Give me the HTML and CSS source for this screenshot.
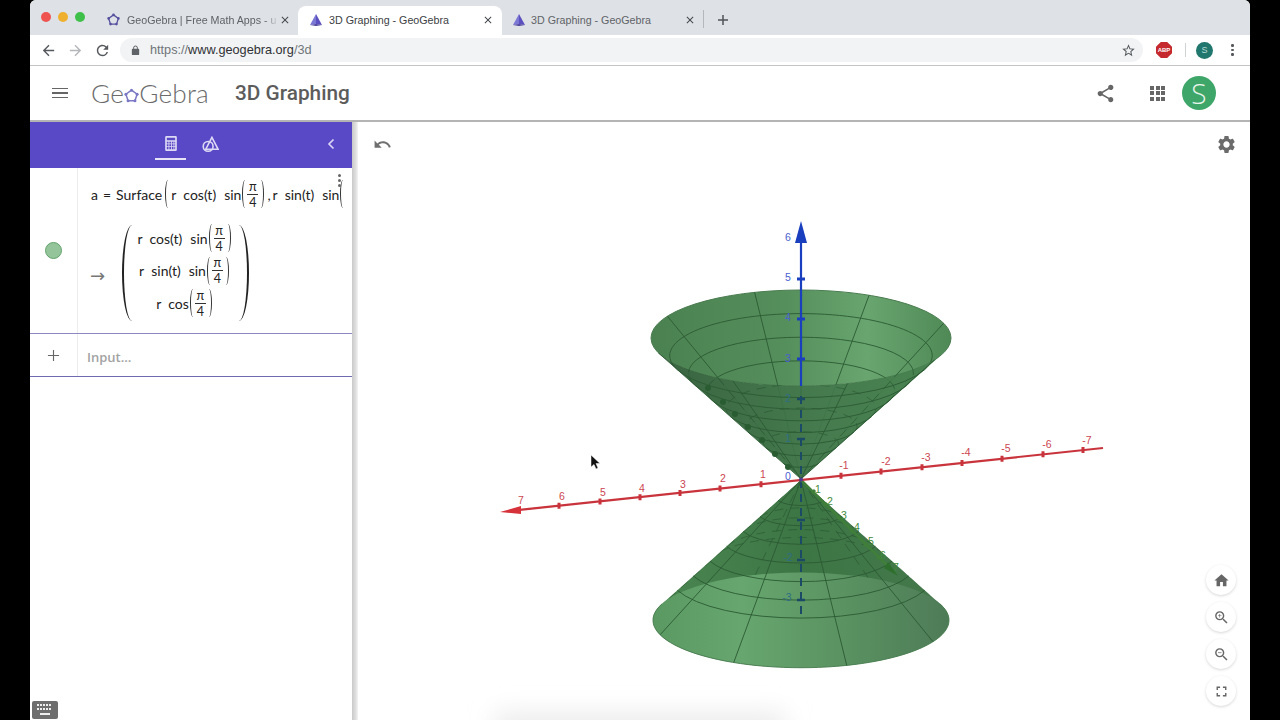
FILE: index.html
```html
<!DOCTYPE html>
<html lang="en">
<head>
<meta charset="utf-8">
<title>3D Graphing - GeoGebra</title>
<link rel="stylesheet" href="styles.css">
</head>
<body>
<svg class="defs" width="0" height="0" aria-hidden="true">
  <symbol id="i-close" viewBox="0 0 24 24"><path d="M19 6.41L17.59 5 12 10.59 6.41 5 5 6.41 10.59 12 5 17.59 6.41 19 12 13.41 17.59 19 19 17.59 13.41 12z"/></symbol>
  <symbol id="i-pyramid" viewBox="0 0 14 14"><path d="M7 1L13 12 7 11z" fill="#5c4fc0"/><path d="M7 1L1 12 7 11z" fill="#7a78d4"/><path d="M1 12L7 13 13 12 7 11z" fill="#48409c"/></symbol>
  <symbol id="i-pent" viewBox="0 0 24 24"><path d="M12 3.5L21 10 17.5 20.5H6.5L3 10z" fill="none" stroke="currentColor" stroke-width="2.4"/><g fill="currentColor"><circle cx="12" cy="3.5" r="2.4"/><circle cx="21" cy="10" r="2.4"/><circle cx="17.5" cy="20.5" r="2.4"/><circle cx="6.5" cy="20.5" r="2.4"/><circle cx="3" cy="10" r="2.4"/></g></symbol>
  <symbol id="i-search" viewBox="0 0 24 24"><path d="M15.5 14h-.79l-.28-.27A6.471 6.471 0 0 0 16 9.5 6.5 6.5 0 1 0 9.5 16c1.61 0 3.09-.59 4.23-1.57l.27.28v.79l5 4.99L20.49 19l-4.99-5zm-6 0C7.01 14 5 11.99 5 9.5S7.01 5 9.5 5 14 7.01 14 9.5 11.99 14 9.5 14z"/></symbol>
</svg>

<div class="window">
  <header class="tabstrip">
    <div class="lights"><i class="light red"></i><i class="light amber"></i><i class="light green"></i></div>
    <div class="tab tab-first">
      <svg class="fav fav-pent"><use href="#i-pent"/></svg>
      <span class="tab-title fade">GeoGebra | Free Math Apps - u</span>
      <svg class="tab-x"><use href="#i-close"/></svg>
    </div>
    <div class="tab tab-active">
      <svg class="fav"><use href="#i-pyramid"/></svg>
      <span class="tab-title">3D Graphing - GeoGebra</span>
      <svg class="tab-x"><use href="#i-close"/></svg>
    </div>
    <div class="tab tab-third">
      <svg class="fav"><use href="#i-pyramid"/></svg>
      <span class="tab-title">3D Graphing - GeoGebra</span>
      <svg class="tab-x"><use href="#i-close"/></svg>
    </div>
    <span class="tab-sep"></span>
    <svg class="new-tab" viewBox="0 0 12 12"><path d="M6 1v10M1 6h10"/></svg>
  </header>

  <nav class="toolbar">
    <svg class="tb-icon" viewBox="0 0 24 24"><path d="M20 11H7.83l5.59-5.59L12 4l-8 8 8 8 1.41-1.41L7.83 13H20v-2z"/></svg>
    <svg class="tb-icon tb-off" viewBox="0 0 24 24"><path d="M12 4l-1.41 1.41L16.17 11H4v2h12.17l-5.58 5.59L12 20l8-8z"/></svg>
    <svg class="tb-icon" viewBox="0 0 24 24"><path d="M17.65 6.35A7.958 7.958 0 0 0 12 4c-4.42 0-7.99 3.58-7.99 8s3.57 8 7.99 8c3.73 0 6.84-2.55 7.73-6h-2.08A5.99 5.99 0 0 1 12 18c-3.31 0-6-2.69-6-6s2.69-6 6-6c1.66 0 3.14.69 4.22 1.78L13 11h7V4l-2.35 2.35z"/></svg>
    <div class="omnibox">
      <svg class="lock" viewBox="0 0 24 24"><path d="M18 8h-1V6c0-2.76-2.24-5-5-5S7 3.24 7 6v2H6c-1.1 0-2 .9-2 2v10c0 1.1.9 2 2 2h12c1.1 0 2-.9 2-2V10c0-1.1-.9-2-2-2zM9 6c0-1.66 1.34-3 3-3s3 1.34 3 3v2H9V6z"/></svg>
      <span class="url"><span class="url-dim">https://</span>www.geogebra.org<span class="url-dim">/3d</span></span>
      <svg class="star" viewBox="0 0 24 24"><path d="M22 9.24l-7.19-.62L12 2 9.19 8.63 2 9.24l5.46 4.73L5.82 21 12 17.27 18.18 21l-1.63-7.03L22 9.24zM12 15.4l-3.76 2.27 1-4.28-3.32-2.88 4.38-.38L12 6.1l1.71 4.04 4.38.38-3.32 2.88 1 4.28L12 15.4z"/></svg>
    </div>
    <span class="abp">ABP</span>
    <span class="tb-sep"></span>
    <span class="profile">S</span>
    <span class="kebab"><i></i><i></i><i></i></span>
  </nav>

  <header class="appbar">
    <div class="burger"><i></i><i></i><i></i></div>
    <div class="logo">Ge<svg class="logo-pent"><use href="#i-pent"/></svg>Gebra</div>
    <h1 class="app-title">3D Graphing</h1>
    <div class="appbar-right">
      <svg class="share" viewBox="0 0 24 24"><path d="M18 16.08c-.76 0-1.44.3-1.96.77L8.91 12.7c.05-.23.09-.46.09-.7s-.04-.47-.09-.7l7.05-4.11c.54.5 1.25.81 2.04.81 1.66 0 3-1.34 3-3s-1.34-3-3-3-3 1.34-3 3c0 .24.04.47.09.7L8.04 9.81C7.5 9.31 6.79 9 6 9c-1.66 0-3 1.34-3 3s1.34 3 3 3c.79 0 1.5-.31 2.04-.81l7.12 4.16c-.05.21-.08.43-.08.65 0 1.61 1.31 2.92 2.92 2.92s2.92-1.31 2.92-2.92-1.31-2.92-2.92-2.92z"/></svg>
      <div class="apps"><i></i><i></i><i></i><i></i><i></i><i></i><i></i><i></i><i></i></div>
      <span class="avatar">S</span>
    </div>
  </header>

  <main class="workspace">
    <section class="panel">
      <div class="panel-head">
        <div class="ptab ptab-on">
          <svg class="calc" viewBox="0 0 14 18"><path fill-rule="evenodd" d="M1.5 0h11A1.5 1.5 0 0 1 14 1.5v15a1.500 1.500 0 0 1-1.500 1.500h-11A1.500 1.500 0 0 1 0 16.500v-15A1.500 1.500 0 0 1 1.500 0zM2 2v3h10V2zM2 7v2h2V7zm3 0v2h2V7zm3 0v2h2V7zm3 0v2h1V7zM2 10v2h2v-2zm3 0v2h2v-2zm3 0v2h2v-2zm3 0v2h1v-2zM2 13v3h2v-3zm3 0v3h2v-3zm3 0v3h2v-3zm3 0v3h1v-3z"/></svg>
        </div>
        <div class="ptab">
          <svg class="geom" viewBox="0 0 18 18"><circle cx="6.500" cy="11" r="5.200"/><path d="M10.500 1.500L17 14H4z"/></svg>
        </div>
        <svg class="collapse" viewBox="0 0 8 12"><path d="M6.500 1.500L2 6l4.500 4.500"/></svg>
      </div>

      <div class="entry">
        <div class="gutter"><span class="marble"></span></div>
        <div class="entry-body">
          <div class="math first-line">
            <span class="v">a</span><span class="eq">=</span><span>Surface</span><span class="paren p-l tall"></span><span class="v">r</span><span class="fn">cos(t)</span><span class="fn">sin</span><span class="paren p-l"></span><span class="frac"><span>π</span><span>4</span></span><span class="paren p-r"></span><span class="comma">,</span><span class="v">r</span><span class="fn">sin(t)</span><span class="fn">sin</span><span class="paren p-l"></span>
          </div>
          <div class="result">
            <span class="arrow">→</span>
            <div class="matrix">
              <div class="math"><span class="v">r</span><span class="fn">cos(t)</span><span class="fn">sin</span><span class="paren p-l"></span><span class="frac"><span>π</span><span>4</span></span><span class="paren p-r"></span></div>
              <div class="math"><span class="v">r</span><span class="fn">sin(t)</span><span class="fn">sin</span><span class="paren p-l"></span><span class="frac"><span>π</span><span>4</span></span><span class="paren p-r"></span></div>
              <div class="math"><span class="v">r</span><span class="fn">cos</span><span class="paren p-l"></span><span class="frac"><span>π</span><span>4</span></span><span class="paren p-r"></span></div>
            </div>
          </div>
        </div>
        <div class="more"><i></i><i></i><i></i></div>
      </div>

      <div class="input-row">
        <div class="gutter"><svg class="plus" viewBox="0 0 14 14"><path d="M7 1v12M1 7h12"/></svg></div>
        <div class="input-ph">Input...</div>
      </div>

      <div class="kbd">
        <svg viewBox="0 0 24 18"><g class="keys"><path d="M4 3h2v2H4zM7 3h2v2H7zM10 3h2v2h-2zM13 3h2v2h-2zM16 3h2v2h-2zM4 7h2v2H4zM7 7h2v2H7zM10 7h2v2h-2zM13 7h2v2h-2zM16 7h2v2h-2zM7 12h10v2H7z"/></g></svg>
      </div>
    </section>

    <div class="divider"></div>

    <section class="graphics">
      <svg class="plot" viewBox="358 122 892 598">
        <defs>
          <linearGradient id="inner" x1="0" x2="1" y1="0" y2="0"><stop offset="0" stop-color="#4b8151"/><stop offset=".45" stop-color="#558f5c"/><stop offset=".72" stop-color="#69a56f"/><stop offset="1" stop-color="#4f8a56"/></linearGradient>
          <linearGradient id="front" x1="0" x2="1" y1="0" y2="0"><stop offset="0" stop-color="#335f3a"/><stop offset=".55" stop-color="#3f7648"/><stop offset="1" stop-color="#44804c"/></linearGradient>
          <linearGradient id="lowtop" x1="0" x2="1" y1="0" y2="0"><stop offset="0" stop-color="#4b8752"/><stop offset=".5" stop-color="#3d7645"/><stop offset="1" stop-color="#44784c"/></linearGradient>
          <linearGradient id="lowbase" x1="0" x2="1" y1="0" y2="0"><stop offset="0" stop-color="#5a9a62"/><stop offset=".3" stop-color="#67a66e"/><stop offset=".65" stop-color="#5a9261"/><stop offset="1" stop-color="#4e7b57"/></linearGradient>
          <clipPath id="clip-up"><path d="M660 354.300L801 479 942 354.300A150 48 0 0 1 660 354.300z"/></clipPath>
          <clipPath id="clip-low"><path d="M801 480L662 603.900A148 47.500 0 1 0 940 603.900z"/></clipPath>
          <filter id="soft" x="-20%" y="-100%" width="140%" height="300%"><feGaussianBlur stdDeviation="12"/></filter>
        </defs>

        <rect class="floor-shadow" x="495" y="712" width="290" height="40" filter="url(#soft)"/>

        <!-- upper cone, far side -->
        <ellipse cx="801" cy="338" rx="150" ry="48" fill="url(#inner)" stroke="#4a7c50"/>
        <g class="grid">
          <path d="M677.600 369.900A131.250 42 0 1 1 924.400 369.900"/>
          <path d="M695.250 385.500A112.500 36 0 1 1 906.750 385.500"/>
          <path d="M712.900 401.100A93.750 30 0 1 1 889.100 401.100"/>
          <path d="M754.600 292.300L801 479M869.100 295.200L801 479M943.700 323.200L801 479M667.400 316.200L801 479M658.300 352.800L801 479"/>
        </g>

        <!-- vertical axis, upper solid part -->
        <path class="z-axis" d="M801 240V396"/>
        <path class="z-head" d="M801 221L807 243H795z"/>
        <path class="z-tick" d="M797 279h8M797 319h8M797 359h8"/>

        <!-- upper cone, near side -->
        <path d="M660 354.300L801 479 942 354.300A150 48 0 0 1 660 354.300z" fill="url(#front)" fill-opacity=".97"/>
        <g clip-path="url(#clip-up)" class="ghost">
          <path d="M677.600 369.900A131.250 42 0 1 1 924.400 369.900"/>
          <path d="M695.250 385.500A112.500 36 0 1 1 906.750 385.500"/>
          <path d="M712.900 401.100A93.750 30 0 1 1 889.100 401.100"/>
          <path d="M730.500 416.700A75 24 0 1 1 871.500 416.700"/>
          <path d="M748.100 432.200A56.250 18 0 1 1 853.900 432.200"/>
          <path d="M765.750 447.800A37.500 12 0 1 1 836.250 447.800"/>
          <path d="M667.400 316.200L801 479M943.700 323.200L801 479"/>
        </g>
        <g class="grid">
          <path d="M924.400 369.900A131.250 42 0 0 1 677.600 369.900"/>
          <path d="M906.750 385.500A112.500 36 0 0 1 695.250 385.500"/>
          <path d="M889.100 401.100A93.750 30 0 0 1 712.900 401.100"/>
          <path d="M871.500 416.700A75 24 0 0 1 730.500 416.700"/>
          <path d="M853.900 432.200A56.250 18 0 0 1 748.100 432.200"/>
          <path d="M836.250 447.800A37.500 12 0 0 1 765.750 447.800"/>
          <path d="M818.600 463.400A18.750 6 0 0 1 783.400 463.400"/>
          <path d="M847.400 383.700L801 479M732.900 380.800L801 479M934.600 359.800L801 479"/>
        </g>
        <g class="ghost-dots">
          <circle cx="708" cy="388" r="3"/><circle cx="723" cy="402" r="3"/><circle cx="735" cy="414" r="3"/><circle cx="748" cy="427" r="3"/><circle cx="762" cy="440" r="3"/><circle cx="775" cy="454" r="3"/><circle cx="788" cy="467" r="3"/>
        </g>

        <!-- lower cone -->
        <path d="M801 480L662 603.900A148 47.500 0 1 0 940 603.900z" fill="url(#lowtop)"/>
        <ellipse cx="801" cy="620" rx="148" ry="47.500" fill="url(#lowbase)"/>
        <path d="M662 603.900A148 47.500 0 1 0 940 603.900" fill="none" stroke="#4f8357"/>
        <g clip-path="url(#clip-low)" class="ghost">
          <path d="M755.300 574.800L801 480M868.200 577.700L801 480M941.800 605.300L801 480M669.100 598.400L801 480"/>
          <path d="M707 561A96.900 31.100 0 0 1 895 561"/>
          <path d="M727 546A79.200 25.400 0 0 1 875 546"/>
          <path d="M743 531A61.400 19.700 0 0 1 859 531"/>
          <path d="M760 517A43.700 14 0 0 1 842 517"/>
        </g>
        <g class="grid">
          <path d="M677.300 590.300A131.700 42.300 0 0 0 924.700 590.300"/>
          <path d="M693.300 576A114.700 36.800 0 0 0 908.700 576"/>
          <path d="M710 561.200A96.900 31.100 0 0 0 892 561.200"/>
          <path d="M726.600 546.300A79.200 25.400 0 0 0 875.400 546.300"/>
          <path d="M743.300 531.400A61.400 19.700 0 0 0 858.700 531.400"/>
          <path d="M760 516.600A43.700 14 0 0 0 842 516.600"/>
          <path d="M778.100 500.400A24.400 7.800 0 0 0 823.900 500.400"/>
          <path d="M846.700 665.200L801 480M733.800 662.300L801 480M660.200 634.700L801 480M932.900 641.600L801 480"/>
        </g>

        <!-- vertical axis seen through the surfaces -->
        <path class="z-dash" d="M801 396V620"/>
        <path class="z-dash-tick" d="M797 399h8M797 439h8M797 520h8M797 560h8M797 600h8"/>

        <!-- green axis -->
        <path class="y-axis" d="M801 480L892 570"/>
        <path class="y-tick" d="M815 490l-3 3M827 503l-3 3M840 516l-3 3M853 529l-3 3M867 543l-3 3M880 556l-3 3"/>
        <path class="y-head" d="M888 562l10 14-14-8z"/>

        <!-- red axis -->
        <path class="x-axis" d="M515 510.400L1103 448"/>
        <path class="x-head" d="M500 512L521 506 521 514z"/>
        <path class="x-tick" d="M559 502.700v6M600 498.400v6M640 494.200v6M680 489.900v6M720 485.600v6M761 481.300v6M841 472.800v6M881 468.500v6M922 464.200v6M962 460v6M1002 455.700v6M1043 451.300v6M1083 447.100v6"/>
        <circle cx="801" cy="479.500" r="2" fill="#4a3a90"/>

        <g class="lb-x">
          <text x="521" y="504">7</text><text x="562" y="500">6</text><text x="603" y="496">5</text><text x="642" y="492">4</text><text x="683" y="488">3</text><text x="723" y="482">2</text><text x="763" y="478">1</text>
          <text x="844" y="469">-1</text><text x="886" y="465">-2</text><text x="926" y="461">-3</text><text x="966" y="456">-4</text><text x="1006" y="452">-5</text><text x="1047" y="448">-6</text><text x="1087" y="444">-7</text>
        </g>
        <g class="lb-z">
          <text x="788" y="241">6</text><text x="788" y="281">5</text><text x="788" y="321">4</text><text x="788" y="362">3</text><text x="788" y="480">0</text>
        </g>
        <g class="lb-zd">
          <text x="788" y="402">2</text><text x="788" y="442">1</text><text x="788" y="561">-2</text><text x="787" y="601">-3</text>
        </g>
        <g class="lb-y">
          <text x="818" y="493">1</text><text x="830" y="505">2</text><text x="844" y="519">3</text><text x="857" y="531">4</text><text x="871" y="545">5</text><text x="883" y="559">6</text><text x="896" y="571">7</text>
        </g>

        <!-- pointer -->
        <path class="pointer" d="M591 455V467L594 464.500 596 469 598 468 596 463.500H600z"/>
      </svg>

      <svg class="undo" viewBox="0 0 24 24"><path d="M12.500 8c-2.650 0-5.050.99-6.900 2.600L2 7v9h9l-3.620-3.620c1.390-1.160 3.160-1.880 5.120-1.880 3.540 0 6.550 2.310 7.600 5.500l2.370-.78C21.080 11.030 17.150 8 12.500 8z"/></svg>
      <svg class="gear" viewBox="0 0 24 24"><path d="M19.140 12.940c.04-.3.06-.61.06-.94 0-.32-.02-.64-.07-.94l2.030-1.580a.49.49 0 0 0 .12-.61l-1.920-3.320a.488.488 0 0 0-.59-.22l-2.390.96c-.5-.38-1.030-.7-1.620-.94l-.36-2.540a.484.484 0 0 0-.48-.41h-3.840c-.24 0-.43.17-.47.41l-.36 2.540c-.59.24-1.130.57-1.620.94l-2.390-.96c-.22-.08-.47 0-.59.22L2.740 8.870c-.12.21-.08.47.12.61l2.030 1.580c-.05.3-.09.63-.09.94s.02.64.07.94l-2.030 1.580a.49.49 0 0 0-.12.61l1.920 3.320c.12.22.37.29.59.22l2.390-.96c.5.38 1.030.7 1.620.94l.36 2.540c.05.24.24.41.48.41h3.840c.24 0 .44-.17.47-.41l.36-2.540c.59-.24 1.130-.56 1.620-.94l2.390.96c.22.08.47 0 .59-.22l1.920-3.320c.12-.22.07-.47-.12-.61l-2.010-1.580zM12 15.600c-1.980 0-3.600-1.620-3.600-3.600s1.620-3.600 3.600-3.600 3.600 1.620 3.600 3.600-1.620 3.600-3.600 3.600z"/></svg>

      <div class="fabs">
        <button class="fab"><svg viewBox="0 0 24 24"><path d="M10 20v-6h4v6h5v-8h3L12 3 2 12h3v8z"/></svg></button>
        <button class="fab"><svg viewBox="0 0 24 24"><use href="#i-search"/><path d="M9 7h1v2h2v1h-2v2H9v-2H7V9h2z"/></svg></button>
        <button class="fab"><svg viewBox="0 0 24 24"><use href="#i-search"/><path d="M7 9h5v1H7z"/></svg></button>
        <button class="fab"><svg viewBox="0 0 24 24"><path d="M7 14H5v5h5v-2H7v-3zm-2-4h2V7h3V5H5v5zm12 7h-3v2h5v-5h-2v3zM14 5v2h3v3h2V5h-5z"/></svg></button>
      </div>
    </section>
  </main>
</div>
</body>
</html>
```
FILE: styles.css
```css
* { box-sizing: border-box; }
html, body { margin: 0; height: 100%; }
body { background: #000; display: flex; justify-content: center; overflow: hidden; font-family: "Liberation Sans", Arial, sans-serif; }
.defs { position: absolute; }
.window { width: 1220px; height: 720px; background: #fff; display: flex; flex-direction: column; border-radius: 6px 6px 0 0; overflow: hidden; }

/* tab strip */
.tabstrip { height: 35px; flex: none; background: #dee1e6; display: flex; align-items: flex-end; }
.lights { display: flex; gap: 7px; width: 74px; padding: 0 0 13px 11px; align-self: flex-end; }
.light { width: 10px; height: 10px; border-radius: 50%; display: block; }
.red { background: #ee5350; }
.amber { background: #f0b02f; }
.green { background: #3fc04a; }
.tab { height: 29px; display: flex; align-items: center; font-size: 10.700px; color: #5f6368; padding: 0 7px 2px 7px; }
.tab-first { width: 194px; padding-left: 3px; }
.tab-first .tab-x { margin-left: 0; }
.tab-active { width: 204px; background: #fff; border-radius: 8px 8px 0 0; color: #3c4043; padding-left: 11px; padding-right: 8px; }
.tab-third { width: 199px; padding-left: 8px; padding-right: 7px; margin-left: 2px; }
.tab-third .fav { margin-right: 5px; }
.fav { width: 14px; height: 14px; flex: none; margin-right: 6px; }
.fav-pent { color: #55509f; width: 13px; height: 13px; margin-right: 7px; }
.tab-title { flex: 1; white-space: nowrap; overflow: hidden; }
.fade { -webkit-mask-image: linear-gradient(90deg, #000 90%, transparent 100%); mask-image: linear-gradient(90deg, #000 90%, transparent 100%); }
.tab-x { width: 12px; height: 12px; flex: none; margin-left: 4px; fill: #45484c; }
.tab-sep { width: 1px; height: 18px; background: #b4b7bc; margin: 0 0 7px 0; }
.new-tab { width: 12px; height: 12px; margin: 0 0 9px 13px; fill: none; stroke: #50545a; stroke-width: 1.500; }

/* toolbar */
.toolbar { height: 31px; flex: none; background: #fff; border-bottom: 1px solid #c4c4c4; display: flex; align-items: center; padding: 0 10px 0 10px; }
.tb-icon { width: 17px; height: 17px; fill: #55585c; margin-right: 10px; flex: none; }
.tb-off { fill: #b4b6b9; }
.omnibox { width: 1023px; height: 24px; margin-left: -1px; background: #f1f3f4; border-radius: 12px; display: flex; align-items: center; padding: 0 7px 0 10px; margin-right: 13px; }
.lock { width: 11px; height: 11px; fill: #5f6368; margin-right: 9px; }
.url { flex: 1; font-size: 12.700px; color: #303134; }
.url-dim { color: #70757a; }
.star { width: 15px; height: 15px; fill: #55585c; }
.abp { width: 16px; height: 16px; background: #c5282d; color: #fff; font-size: 6px; font-weight: 700; display: flex; align-items: center; justify-content: center; clip-path: polygon(30% 0, 70% 0, 100% 30%, 100% 70%, 70% 100%, 30% 100%, 0 70%, 0 30%); }
.tb-sep { width: 1px; height: 14px; background: #d0d3d6; margin: 0 10px 0 13px; }
.profile { width: 17px; height: 17px; border-radius: 50%; background: #20776d; color: #b9dcd6; font-size: 9px; display: flex; align-items: center; justify-content: center; }
.kebab { display: flex; flex-direction: column; gap: 2px; margin-left: 18px; }
.kebab i { width: 2.500px; height: 2.500px; background: #55585c; border-radius: 50%; display: block; }

/* app bar */
.appbar { height: 56px; flex: none; display: flex; align-items: center; background: #fff; border-bottom: 2px solid #b4b4b4; padding: 0 34px 0 22px; }
.burger { width: 16px; display: flex; flex-direction: column; gap: 3px; margin-right: 23px; }
.burger i { height: 1.600px; background: #666; display: block; }
.logo { font-family: Lato, "Liberation Sans", sans-serif; font-weight: 300; font-size: 26.200px; color: #6b6b6b; width: 144px; display: flex; align-items: center; letter-spacing: .2px; }
.logo-pent { width: 15px; height: 15px; color: #7a78c4; margin: 4px 0 0 0; }
.app-title { margin: 0; font-family: Roboto, "Liberation Sans", sans-serif; font-weight: 500; font-size: 20.800px; color: #5c5c5c; }
.appbar-right { margin-left: auto; display: flex; align-items: center; }
.share { width: 21px; height: 21px; fill: #666; margin-right: 34px; }
.apps { display: grid; grid-template-columns: repeat(3, 4px); gap: 1.500px; margin-right: 17px; }
.apps i { width: 4px; height: 4px; background: #666; display: block; }
.avatar { width: 34px; height: 34px; border-radius: 50%; background: #3fa66a; color: #e8f5ec; font-family: "Open Sans", sans-serif; font-weight: 300; font-size: 28px; display: flex; align-items: center; justify-content: center; }

/* workspace */
.workspace { flex: 1; display: flex; min-height: 0; }
.panel { width: 322px; flex: none; position: relative; display: flex; flex-direction: column; background: #fff; }
.panel-head { height: 46px; background: #5a49c6; display: flex; align-items: flex-start; padding-left: 125px; position: relative; }
.ptab { width: 31px; height: 38px; display: flex; align-items: center; justify-content: center; margin-right: 9px; padding-top: 7px; }
.ptab-on { border-bottom: 2px solid #e6e3f7; }
.calc { width: 12px; height: 15px; fill: #dcd9f5; }
.geom { width: 17px; height: 17px; fill: none; stroke: #dcd9f5; stroke-width: 1.700; }
.collapse { width: 8px; height: 12px; fill: none; stroke: #dcd9f5; stroke-width: 1.600; position: absolute; left: 297px; top: 16px; }

.entry { height: 166px; display: flex; position: relative; border-bottom: 1px solid #8d88bf; flex: none; overflow: hidden; }
.gutter { width: 48px; flex: none; border-right: 1px solid #ededed; display: flex; align-items: center; justify-content: center; }
.marble { width: 17px; height: 17px; border-radius: 50%; background: #94c49a; border: 1px solid #62a26c; }
.entry-body { flex: 1; min-width: 0; padding: 0 0 0 13px; }
.math { display: flex; align-items: center; white-space: nowrap; font-family: Lato, "Noto Sans", sans-serif; font-size: 14px; color: #222; height: 32px; }
.first-line { height: 52px; }
.v { margin-right: 7px; }
.eq { margin: 0 5px 0 -2px; }
.fn { margin-right: 8px; }
.fn + .paren { margin-left: -7px; }
.comma { margin: 0 2px 0 0; }
.paren { display: block; flex: none; width: 6px; height: 28px; border: 0 solid #333; }
.p-l { border-left-width: 1.300px; border-radius: 50% 0 0 50% / 50% 0 0 50%; margin-right: -1px; }
.p-r { border-right-width: 1.300px; border-radius: 0 50% 50% 0 / 0 50% 50% 0; margin-right: 3px; }
.tall.p-l { margin: 0 0 0 3px; }
.frac { display: flex; flex-direction: column; align-items: center; font-size: 12.500px; line-height: 13px; width: 11px; }
.frac span:first-child { border-bottom: 1px solid #333; width: 100%; text-align: center; padding-bottom: 1px; }
.frac span:last-child { padding-top: 1px; }
.result { display: flex; align-items: flex-start; }
.arrow { font-family: "DejaVu Sans", sans-serif; font-size: 18px; line-height: 20px; color: #777; width: 32px; margin-top: 46px; margin-left: -1px; padding-right: 0; }
.matrix { width: 127px; height: 96px; margin-top: 5px; display: flex; flex-direction: column; align-items: center; border: 0 solid #222; border-left-width: 2px; border-right-width: 2px; border-radius: 10px / 48px; }
.matrix .math { height: 32.500px; flex: none; }
.matrix .math:first-child { margin-top: -3px; }
.more { position: absolute; left: 308px; top: 6px; display: flex; flex-direction: column; gap: 2px; }
.more i { width: 3px; height: 3px; border-radius: 50%; background: #666; display: block; }

.input-row { height: 43px; flex: none; display: flex; border-bottom: 1px solid #706bb0; }
.plus { width: 13px; height: 13px; fill: none; stroke: #666; stroke-width: 1.200; }
.input-ph { flex: 1; padding: 14px 0 0 9px; font-family: "Open Sans", sans-serif; font-size: 13px; font-weight: 600; color: #a3a3a3; }

.kbd { position: absolute; left: 2px; bottom: 1px; width: 26px; height: 18px; background: #6e6e6e; border-radius: 2px; }
.kbd svg { display: block; width: 26px; height: 18px; }
.keys { fill: #eee; }

.divider { width: 6px; flex: none; background: linear-gradient(90deg, #c9c9c9, #dedede 60%, #f4f4f4); }

/* graphics view */
.graphics { flex: 1; position: relative; overflow: hidden; background: #fff; }
.plot { display: block; width: 892px; height: 598px; }
.floor-shadow { fill: #ececec; }
.grid { fill: none; stroke: #2b5a33; stroke-width: .9; }
.ghost { fill: none; stroke: #1f4a28; stroke-width: .8; stroke-dasharray: 9 7; opacity: .55; }
.ghost-dots { fill: #2a5c32; }
.z-axis { stroke: #1a3fbe; stroke-width: 2.200; }
.z-head { fill: #1a3fbe; }
.z-tick { stroke: #1a3fbe; stroke-width: 3; }
.z-dash { stroke: #1b4a66; stroke-width: 2; stroke-dasharray: 8 6; fill: none; }
.z-dash-tick { stroke: #1b4a66; stroke-width: 2.500; }
.y-axis { stroke: #3f7f3a; stroke-width: 2.500; }
.y-tick { stroke: #3f7f3a; stroke-width: 3; }
.y-head { fill: #2f6f2e; }
.x-axis { stroke: #c9343c; stroke-width: 2.200; }
.x-head { fill: #d5323a; }
.x-tick { stroke: #c9343c; stroke-width: 3; }
.plot text { font-family: "Liberation Sans", Arial, sans-serif; font-size: 10.500px; text-anchor: middle; }
.lb-x { fill: #cc4650; }
.lb-z { fill: #4a5fd0; }
.lb-zd { fill: #2f6d86; }
.lb-y { fill: #3f8a3a; }
.pointer { fill: #111; stroke: #fff; stroke-width: .5; }
.undo { position: absolute; left: 15px; top: 13px; width: 19px; height: 19px; fill: #6f6f6f; }
.gear { position: absolute; left: 858px; top: 12px; width: 21px; height: 21px; fill: #6b6b6b; }
.fabs { position: absolute; right: 14px; bottom: 14px; display: flex; flex-direction: column; gap: 7px; }
.fab { width: 30px; height: 30px; padding: 0; border: 0; border-radius: 50%; background: #fff; box-shadow: 0 1px 3px rgba(0,0,0,.16); display: flex; align-items: center; justify-content: center; }
.fab svg { width: 17px; height: 17px; fill: #666; }
```
